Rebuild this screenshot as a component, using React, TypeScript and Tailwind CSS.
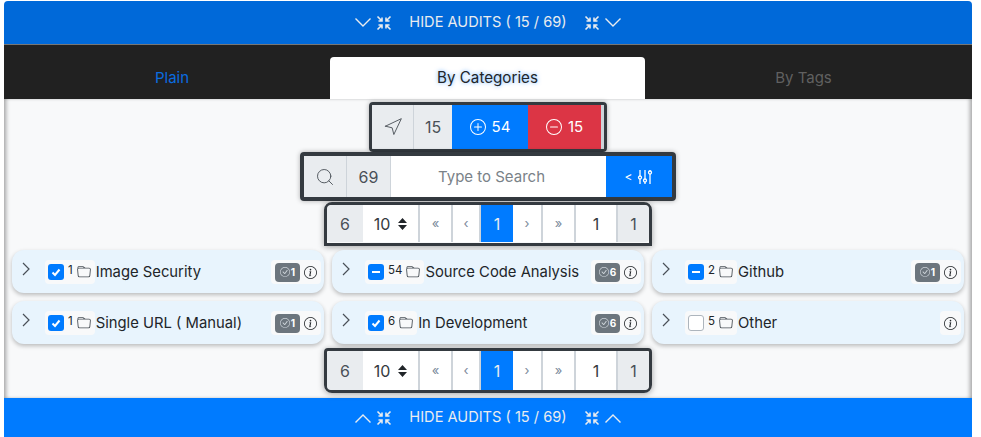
import { BsCheckCircle, BsFolder, BsInfoCircle, BsPlusCircle, BsDashCircle } from 'react-icons/bs';
import { FiNavigation, FiSearch } from 'react-icons/fi';

function Shrink() {
  return (
    <svg width="16" height="16" viewBox="0 0 16 16" fill="none" stroke="currentColor" strokeWidth="1.6">
      <path d="M1.5 1.5 6 6M6 2.5V6H2.5" />
      <path d="M14.5 1.5 10 6M10 2.5V6h3.5" />
      <path d="M1.5 14.5 6 10M6 13.5V10H2.5" />
      <path d="M14.5 14.5 10 10M10 13.5V10h3.5" />
    </svg>
  );
}

function Sliders() {
  return (
    <svg width="16" height="16" viewBox="0 0 16 16" fill="none" stroke="currentColor" strokeWidth="1.3">
      <path d="M3 1v6M3 10v5M8 1v9M8 13v2M13 1v1M13 5v10" />
      <circle cx="3" cy="8.5" r="1.5" />
      <circle cx="8" cy="11.5" r="1.5" />
      <circle cx="13" cy="3.5" r="1.5" />
    </svg>
  );
}

function BarChevron({ up }: { up?: boolean }) {
  return (
    <svg width="16" height="9" viewBox="0 0 16 9" fill="none" stroke="currentColor" strokeWidth="1.4">
      <path d={up ? 'M.5 8.5 8 1l7.5 7.5' : 'M.5.5 8 8 15.5.5'} />
    </svg>
  );
}

function AuditBar({ up, dark }: { up?: boolean; dark?: boolean }) {
  return (
    <div
      className={`flex items-center justify-center text-[14.6px] text-[#e9ecef] ${
        dark ? 'h-[43px] rounded-t bg-[#0069d9]' : 'h-[39px] bg-[#007bff] pt-[1px]'
      }`}
    >
      <BarChevron up={up} />
      <span className="ml-[5px]">
        <Shrink />
      </span>
      <span className="mx-[17px]">HIDE AUDITS ( 15 / 69)</span>
      <Shrink />
      <span className="ml-[5px]">
        <BarChevron up={up} />
      </span>
    </div>
  );
}

function Pager({ bottom }: { bottom?: boolean }) {
  const cell = 'flex items-center justify-center border-r-2 border-[#ced4da] bg-white';
  const arrow = `${cell} text-[13px] text-[#7a8a9a]`;
  return (
    <div
      className={`flex w-[328px] border-[3px] border-[#343a40] text-[16px] text-[#495057] shadow-[0_1px_6px_rgba(0,0,0,0.35)] ${
        bottom ? 'mt-[4px] h-[45px] rounded-b-lg rounded-t-sm' : 'h-[44px] rounded-t-lg pb-[1px]'
      }`}
    >
      <div className="flex w-[36px] items-center justify-center rounded-l bg-[#e9ecef]">6</div>
      <div className={`${cell} w-[57px] gap-[8px] text-[#343a40]`}>
        10
        <svg width="9" height="12" viewBox="0 0 9 12" fill="#212529">
          <path d="M4.5 0 9 5H0zM4.5 12 0 7h9z" />
        </svg>
      </div>
      <div className={`${arrow} w-[33px]`}>«</div>
      <div className={`${arrow} w-[28px] border-r-0`}>‹</div>
      <div className="flex w-[32px] items-center justify-center bg-[#007bff] text-[#e9ecef]">1</div>
      <div className={`${arrow} w-[30px]`}>›</div>
      <div className={`${arrow} w-[33px]`}>»</div>
      <div className={`${cell} w-[42px] border-r-0 text-[#343a40]`}>1</div>
      <div className="flex w-[31px] items-center justify-center rounded-r bg-[#e9ecef]">1</div>
    </div>
  );
}

type Audit = {
  name: string;
  count: number;
  state: 'checked' | 'partial' | 'empty';
  done?: number;
};

const audits: Audit[] = [
  { name: 'Image Security', count: 1, state: 'checked', done: 1 },
  { name: 'Source Code Analysis', count: 54, state: 'partial', done: 6 },
  { name: 'Github', count: 2, state: 'partial', done: 1 },
  { name: 'Single URL ( Manual)', count: 1, state: 'checked', done: 1 },
  { name: 'In Development', count: 6, state: 'checked', done: 6 },
  { name: 'Other', count: 5, state: 'empty' },
];

function CheckBox({ state }: { state: Audit['state'] }) {
  if (state === 'empty') {
    return <span className="size-4 rounded-[3px] border border-[#adb5bd] bg-white" />;
  }
  return (
    <span className="flex size-4 items-center justify-center rounded-[3px] bg-[#007bff]">
      {state === 'checked' ? (
        <svg width="10" height="10" viewBox="0 0 10 10" fill="none" stroke="white" strokeWidth="2">
          <path d="M1.5 5.5 4 8l4.5-5.5" />
        </svg>
      ) : (
        <span className="h-[2px] w-2 bg-white" />
      )}
    </span>
  );
}

function AuditCard({ audit }: { audit: Audit }) {
  return (
    <div className="flex h-[43px] items-center rounded-xl bg-[#e8f4fd] pr-[3px] pl-[10px] shadow-[0_2px_4px_rgba(0,0,0,0.25)]">
      <svg width="8" height="14" viewBox="0 0 8 14" fill="none" stroke="#495057" strokeWidth="1.2" className="mb-[5px]">
        <path d="M1 1l6 6-6 6" />
      </svg>
      <div className="mt-[1px] ml-[15px] flex h-[24px] items-center rounded bg-[#f8f9fa] pr-[4px] pl-[3px]">
        <CheckBox state={audit.state} />
        <span className="mb-[2px] ml-[4px] text-[11.5px] text-[#212529]">{audit.count}</span>
        <BsFolder size={14} className="ml-[4px] text-[#495057]" />
      </div>
      <span className="mt-[1px] ml-[1px] text-[14.8px] text-[#212529]">{audit.name}</span>
      <div className="mt-[1px] ml-auto flex h-[24px] items-center gap-[4px] rounded bg-[#f8f9fa] px-[4px]">
        {audit.done !== undefined && (
          <span className="flex h-[19px] w-[25px] items-center justify-center gap-[1px] rounded bg-[#6c757d] text-[10px] font-bold text-white">
            <BsCheckCircle size={10} className="text-[#ced4da]" />
            {audit.done}
          </span>
        )}
        <BsInfoCircle size={13} className="text-[#212529]" />
      </div>
    </div>
  );
}

export default function App() {
  return (
    <div className="h-[437px] w-[981px] overflow-hidden bg-white pt-px pl-1 font-['Inter','Liberation_Sans',sans-serif]">
      <div className="w-[968px]">
        <AuditBar dark />
        <div className="flex h-[55px] items-end border-t border-[#777] bg-[#212121] text-[15px]">
          <div className="flex h-[42px] w-[326px] items-center justify-center pl-[10px] text-[#0a6ce0]">Plain</div>
          <div className="flex h-[42px] w-[315px] items-center justify-center rounded-t bg-white text-[15.2px] text-[#212529] [text-shadow:0_0_4px_rgba(0,123,255,0.6)]">
            By Categories
          </div>
          <div className="flex h-[42px] flex-1 items-center justify-center pr-[10px] text-[#606060]">By Tags</div>
        </div>
        <div className="flex h-[299px] flex-col items-center bg-[#f8f9fa] pt-[3px] shadow-[inset_4px_0_4px_-2px_rgba(0,0,0,0.35),inset_-4px_0_4px_-2px_rgba(0,0,0,0.35)]">
          <div className="flex h-[50px] w-[238px] overflow-hidden rounded border-[3px] border-[#343a40] text-[16px] text-[#495057] shadow-[0_0_5px_rgba(0,0,0,0.3)]">
            <div className="flex w-[42px] items-center justify-center border-r border-[#ced4da] bg-[#e9ecef]">
              <FiNavigation size={20} strokeWidth={1.1} className="text-[#495057]" />
            </div>
            <div className="flex w-[38px] items-center justify-center bg-[#e9ecef]">15</div>
            <div className="flex w-[76px] items-center justify-center gap-[6px] bg-[#007bff] text-[15px] text-white">
              <BsPlusCircle size={16} />
              54
            </div>
            <div className="flex w-[73px] items-center justify-center gap-[6px] bg-[#dc3545] text-[15px] text-white">
              <BsDashCircle size={16} />
              15
            </div>
            <div className="flex-1 bg-[#ced4da]" />
          </div>
          <div className="flex h-[49px] w-[376px] overflow-hidden rounded border-4 border-[#343a40] text-[16px] text-[#495057] shadow-[0_0_5px_rgba(0,0,0,0.3)]">
            <div className="flex w-[43px] items-center justify-center border-r border-[#ced4da] bg-[#e9ecef]">
              <FiSearch size={20} strokeWidth={1.1} className="text-[#495057]" />
            </div>
            <div className="flex w-[44px] items-center justify-center border-r border-[#ced4da] bg-[#e9ecef]">69</div>
            <div className="flex w-[215px] items-center justify-center bg-white pt-[2px] pr-[14px] text-[15px] text-[#7a8288]">
              Type to Search
            </div>
            <div className="flex flex-1 items-center justify-center gap-[5px] bg-[#007bff] text-[12px] text-white">
              &lt;
              <Sliders />
            </div>
          </div>
          <div className="mt-[1px]">
            <Pager />
          </div>
          <div className="mt-[4px] grid w-full grid-cols-3 gap-2 px-2">
            {audits.map((audit) => (
              <AuditCard key={audit.name} audit={audit} />
            ))}
          </div>
          <Pager bottom />
        </div>
        <AuditBar up />
      </div>
    </div>
  );
}
